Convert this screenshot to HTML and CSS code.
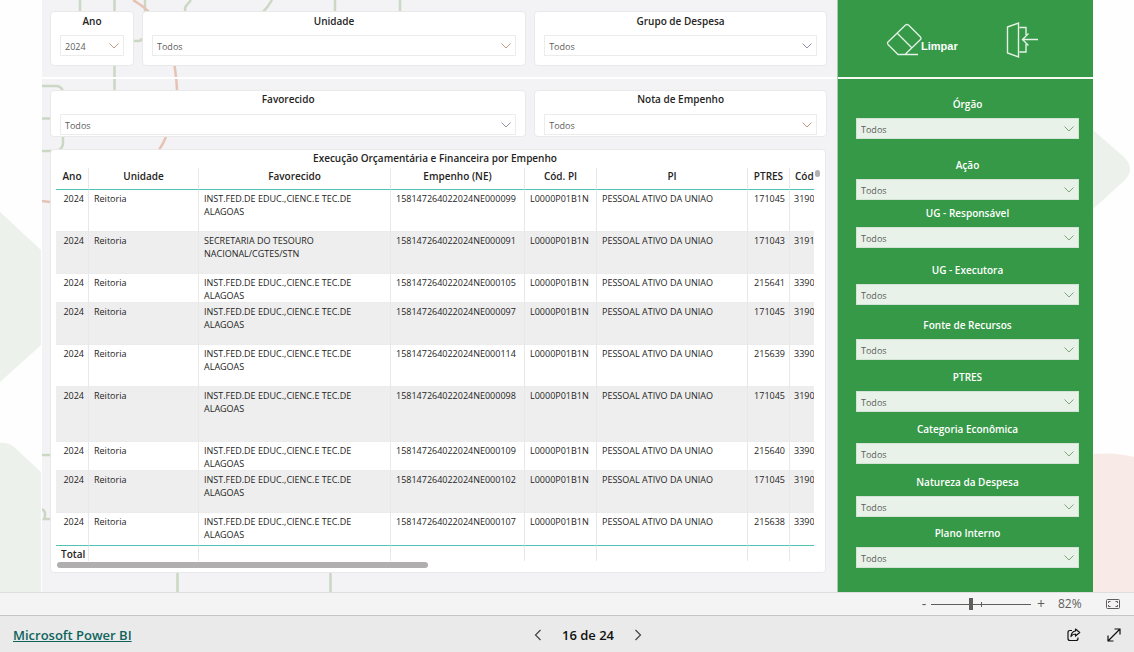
FILE: index.html
```html
<!DOCTYPE html>
<html lang="pt-BR">
<head>
<meta charset="utf-8">
<title>Execução Orçamentária e Financeira</title>
<link rel="stylesheet" href="styles.css">
</head>
<body>
<main class="stage">
  <svg class="backdrop backdrop-left" width="42" height="592" viewBox="0 0 42 592" aria-hidden="true">
    <path d="M0 212L41 250V345L0 382ZM0 443Q8 442 14 447L41 472V592H0Z" fill="#edf1ec"/>
  </svg>
  <svg class="backdrop backdrop-right" width="41" height="592" viewBox="0 0 41 592" aria-hidden="true">
    <path d="M0 130L32 158Q42 169 32 180L0 209Z" fill="#edf1ec"/>
    <path d="M0 454Q22 452 41 457V592H0Z" fill="#f8eae6"/>
  </svg>
  <div class="report">
    <section class="content">
      <svg class="lines" width="795" height="592" viewBox="42 0 795 592" fill="none" stroke="#cad8c4" stroke-width="2.5" aria-hidden="true">
        <path d="M80 0V12M114.500 0V90M145 0V12M191 0L186 6Q184 9 186 12M272 0Q268 7 263 12M335 0V12M400 0V12M133 41H138Q142 41 142 38M42 86H57Q63 87 63 93V144Q62 150 56 151H42M42 118.500H51M42 455H50M42 509Q47 512 44 519H50M177.500 572V592M330.500 572V592"/>
        <path d="M133 0Q150 10 160 25Q175 48 177 90M166 137Q163 144 159 150M42 201L50 202" stroke="#e6c2b5"/>
      </svg>
      <div class="filters filters-top">
        <div class="card slicer"><label for="ano">Ano</label><div class="pick warm"><select id="ano"><option>2024</option></select><svg viewBox="0 0 10 6"><path d="M.5.500L5 5L9.500.500"/></svg></div></div>
        <div class="card slicer"><label for="unidade">Unidade</label><div class="pick warm"><select id="unidade"><option>Todos</option></select><svg viewBox="0 0 10 6"><path d="M.5.500L5 5L9.500.500"/></svg></div></div>
        <div class="card slicer"><label for="grupo">Grupo de Despesa</label><div class="pick"><select id="grupo"><option>Todos</option></select><svg viewBox="0 0 10 6"><path d="M.5.500L5 5L9.500.500"/></svg></div></div>
      </div>
      <div class="filters filters-bottom">
        <div class="card slicer"><label for="favorecido">Favorecido</label><div class="pick"><select id="favorecido"><option>Todos</option></select><svg viewBox="0 0 10 6"><path d="M.5.500L5 5L9.500.500"/></svg></div></div>
        <div class="card slicer"><label for="nota">Nota de Empenho</label><div class="pick warm"><select id="nota"><option>Todos</option></select><svg viewBox="0 0 10 6"><path d="M.5.500L5 5L9.500.500"/></svg></div></div>
      </div>
      <div class="card grid-card">
        <h2>Execução Orçamentária e Financeira por Empenho</h2>
        <div class="grid-view">
        <table>
          <colgroup><col class="c-year"><col class="c-unit"><col class="c-payee"><col class="c-note"><col class="c-code"><col class="c-plan"><col class="c-ptres"><col></colgroup>
          <thead><tr><th>Ano</th><th>Unidade</th><th>Favorecido</th><th>Empenho (NE)</th><th>Cód. PI</th><th>PI</th><th>PTRES</th><th class="cut">Cód</th></tr></thead>
          <tbody>
            <tr><td>2024</td><td>Reitoria</td><td>INST.FED.DE EDUC.,CIENC.E TEC.DE ALAGOAS</td><td>158147264022024NE000099</td><td>L0000P01B1N</td><td>PESSOAL ATIVO DA UNIAO</td><td>171045</td><td class="cut">3190</td></tr>
            <tr><td>2024</td><td>Reitoria</td><td>SECRETARIA DO TESOURO NACIONAL/CGTES/STN</td><td>158147264022024NE000091</td><td>L0000P01B1N</td><td>PESSOAL ATIVO DA UNIAO</td><td>171043</td><td class="cut">3191</td></tr>
            <tr class="short"><td>2024</td><td>Reitoria</td><td>INST.FED.DE EDUC.,CIENC.E TEC.DE ALAGOAS</td><td>158147264022024NE000105</td><td>L0000P01B1N</td><td>PESSOAL ATIVO DA UNIAO</td><td>215641</td><td class="cut">3390</td></tr>
            <tr><td>2024</td><td>Reitoria</td><td>INST.FED.DE EDUC.,CIENC.E TEC.DE ALAGOAS</td><td>158147264022024NE000097</td><td>L0000P01B1N</td><td>PESSOAL ATIVO DA UNIAO</td><td>171045</td><td class="cut">3190</td></tr>
            <tr><td>2024</td><td>Reitoria</td><td>INST.FED.DE EDUC.,CIENC.E TEC.DE ALAGOAS</td><td>158147264022024NE000114</td><td>L0000P01B1N</td><td>PESSOAL ATIVO DA UNIAO</td><td>215639</td><td class="cut">3390</td></tr>
            <tr class="tall"><td>2024</td><td>Reitoria</td><td>INST.FED.DE EDUC.,CIENC.E TEC.DE ALAGOAS</td><td>158147264022024NE000098</td><td>L0000P01B1N</td><td>PESSOAL ATIVO DA UNIAO</td><td>171045</td><td class="cut">3190</td></tr>
            <tr class="short"><td>2024</td><td>Reitoria</td><td>INST.FED.DE EDUC.,CIENC.E TEC.DE ALAGOAS</td><td>158147264022024NE000109</td><td>L0000P01B1N</td><td>PESSOAL ATIVO DA UNIAO</td><td>215640</td><td class="cut">3390</td></tr>
            <tr><td>2024</td><td>Reitoria</td><td>INST.FED.DE EDUC.,CIENC.E TEC.DE ALAGOAS</td><td>158147264022024NE000102</td><td>L0000P01B1N</td><td>PESSOAL ATIVO DA UNIAO</td><td>171045</td><td class="cut">3190</td></tr>
            <tr class="last"><td>2024</td><td>Reitoria</td><td>INST.FED.DE EDUC.,CIENC.E TEC.DE ALAGOAS</td><td>158147264022024NE000107</td><td>L0000P01B1N</td><td>PESSOAL ATIVO DA UNIAO</td><td>215638</td><td class="cut">3390</td></tr>
          </tbody>
          <tfoot><tr><th scope="row">Total</th><td></td><td></td><td></td><td></td><td></td><td></td><td></td></tr></tfoot>
        </table>
        <span class="thumb-y"></span>
        </div>
        <div class="thumb-x"></div>
      </div>
    </section>
    <aside class="sidebar">
      <div class="actions">
        <button type="button" class="clear"><svg width="36" height="34" viewBox="0 0 36 34" fill="none" stroke="#e4f2e6" stroke-width="1.300" stroke-linejoin="round"><path d="M32 31.500H12L2 21.500Q1 20 2 19L19.500 2Q21 1 22.500 2L34.500 14Q35.500 15.500 34.500 16.500L19 31.500M11.500 10.500L25.500 24.500"/></svg><span>Limpar</span></button>
        <button type="button" class="exit" aria-label="Sair"><svg width="32" height="36" viewBox="0 0 32 36" fill="none" stroke="#e4f2e6" stroke-width="1.400"><path d="M1.500 5L12.500 1V35L1.500 31ZM13.500 5.500H20V13M20 22V30H13.500M16 17.500H32M22.500 11.500L16.500 17.500L22.500 23.500"/></svg></button>
      </div>
      <div class="side-filters">
        <div class="field"><label for="orgao">Órgão</label><div class="pick"><select id="orgao"><option>Todos</option></select><svg viewBox="0 0 10 6"><path d="M.5.500L5 5L9.500.500"/></svg></div></div>
        <div class="field"><label for="acao">Ação</label><div class="pick"><select id="acao"><option>Todos</option></select><svg viewBox="0 0 10 6"><path d="M.5.500L5 5L9.500.500"/></svg></div></div>
        <div class="field"><label for="ugr">UG - Responsável</label><div class="pick"><select id="ugr"><option>Todos</option></select><svg viewBox="0 0 10 6"><path d="M.5.500L5 5L9.500.500"/></svg></div></div>
        <div class="field"><label for="uge">UG - Executora</label><div class="pick"><select id="uge"><option>Todos</option></select><svg viewBox="0 0 10 6"><path d="M.5.500L5 5L9.500.500"/></svg></div></div>
        <div class="field"><label for="fonte">Fonte de Recursos</label><div class="pick"><select id="fonte"><option>Todos</option></select><svg viewBox="0 0 10 6"><path d="M.5.500L5 5L9.500.500"/></svg></div></div>
        <div class="field"><label for="ptres">PTRES</label><div class="pick"><select id="ptres"><option>Todos</option></select><svg viewBox="0 0 10 6"><path d="M.5.500L5 5L9.500.500"/></svg></div></div>
        <div class="field"><label for="categoria">Categoria Econômica</label><div class="pick"><select id="categoria"><option>Todos</option></select><svg viewBox="0 0 10 6"><path d="M.5.500L5 5L9.500.500"/></svg></div></div>
        <div class="field"><label for="natureza">Natureza da Despesa</label><div class="pick"><select id="natureza"><option>Todos</option></select><svg viewBox="0 0 10 6"><path d="M.5.500L5 5L9.500.500"/></svg></div></div>
        <div class="field"><label for="plano">Plano Interno</label><div class="pick"><select id="plano"><option>Todos</option></select><svg viewBox="0 0 10 6"><path d="M.5.500L5 5L9.500.500"/></svg></div></div>
      </div>
    </aside>
  </div>
</main>
<div class="zoombar">
  <button type="button" class="step" aria-label="Reduzir">-</button>
  <input type="range" min="10" max="190" value="82" aria-label="Zoom">
  <button type="button" class="step" aria-label="Ampliar">+</button>
  <output>82%</output>
  <button type="button" class="fit" aria-label="Ajustar à página"><svg width="14" height="12" viewBox="0 0 14 12" fill="none" stroke="#605e5c"><rect x=".5" y="1.500" width="13" height="9" rx="1"/><path d="M4.500 3.500H2.500V5M9.500 3.500H11.500V5M4.500 8.500H2.500V7M9.500 8.500H11.500V7"/></svg></button>
</div>
<footer class="footer">
  <a href="#">Microsoft Power BI</a>
  <nav class="pager">
    <button type="button" aria-label="Página anterior"><svg width="8" height="12" viewBox="0 0 8 12"><path d="M6.500 1L1.500 6L6.500 11"/></svg></button>
    <span>16 de 24</span>
    <button type="button" aria-label="Próxima página"><svg width="8" height="12" viewBox="0 0 8 12"><path d="M1.500 1L6.500 6L1.500 11"/></svg></button>
  </nav>
  <div class="tools">
    <button type="button" aria-label="Compartilhar"><svg width="14" height="14" viewBox="0 0 14 14" fill="none" stroke="#111" stroke-width="1.200" stroke-linejoin="round"><path d="M5 2.500H3Q1 2.500 1 4.500V10.500Q1 12.500 3 12.500H9Q11 12.500 11 10.500V9.500M8.500 1L12.700 4.500L8.500 8V6Q5.500 6 4 8.500Q4.500 3.500 8.500 3Z"/></svg></button>
    <button type="button" aria-label="Tela cheia"><svg width="14" height="14" viewBox="0 0 14 14" fill="none" stroke="#111" stroke-width="1.200"><path d="M1 13L13 1M7.500 1H13V6.500M1 7.500V13H6.500"/></svg></button>
  </div>
</footer>
</body>
</html>
```
FILE: styles.css
```css
* { box-sizing: border-box; }
body {
  margin: 0;
  min-height: 100vh;
  display: flex;
  flex-direction: column;
  font-family: "Open Sans", "Noto Sans", sans-serif;
  font-size: 10px;
  color: #252423;
  background: #fdfefd;
}
button { border: 0; padding: 0; background: none; font: inherit; color: inherit; display: flex; align-items: center; }
svg { display: block; flex: none; }

.stage { position: relative; flex: 1; display: flex; padding: 0 41px 0 42px; }
.backdrop { position: absolute; top: 0; }
.backdrop-left { left: 0; }
.backdrop-right { right: 0; }
.report { flex: 1; display: grid; grid-template-columns: minmax(0, 1fr) 256px; position: relative; }

.content { position: relative; background: #f3f3f5; padding-bottom: 18px; overflow: hidden; }
.lines { position: absolute; left: 0; top: 0; }
.filters { position: relative; display: grid; gap: 8px; padding: 0 10px 0 8px; }
.filters-top { grid-template-columns: 84px minmax(0, 383fr) minmax(0, 292fr); padding-top: 11px; padding-bottom: 11px; border-bottom: 2px solid #fff; }
.filters-bottom { grid-template-columns: minmax(0, 475fr) minmax(0, 292fr); padding-top: 11px; padding-bottom: 12px; }
.card { position: relative; background: #fff; border: 1px solid #e9e9ea; border-radius: 4px; }
.slicer { padding: 2px 9px 9px; }
.slicer label, .field label { display: block; text-align: center; font-size: 10px; line-height: 14px; font-weight: 600; margin-bottom: 7px; }
.filters-bottom .slicer { padding-top: 1px; padding-bottom: 1px; }
.filters-bottom .slicer label { margin-bottom: 8px; }
.pick { position: relative; }
.pick select {
  display: block; width: 100%; height: 21px; appearance: none;
  border: 1px solid #ececec; border-radius: 0; background: #fff;
  font: inherit; font-size: 9px; color: #605e5c; padding: 2px 4px 0;
}
.pick svg { position: absolute; right: 5px; top: 8px; width: 10px; height: 6px; fill: none; stroke: #8f8fa6; pointer-events: none; }
.pick.warm svg { stroke: #c29a80; }

.grid-card { margin: 0 11px 0 8px; padding: 1px 11px 4px 5px; }
.grid-card h2 { margin: 0 0 2px; font-size: 10px; line-height: 15px; font-weight: 600; text-align: center; }
.grid-view { position: relative; }
table { width: 100%; table-layout: fixed; border-collapse: separate; border-spacing: 0; line-height: 13px; }
.c-year { width: 33px; }
.c-unit { width: 110px; }
.c-payee { width: 192px; }
.c-note { width: 134px; }
.c-code { width: 72px; }
.c-plan { width: 151px; }
.c-ptres { width: 42px; }
th, td { border-right: 1px solid #e8e8e8; padding: 2px 4px 0 5px; vertical-align: top; text-align: left; overflow: hidden; white-space: nowrap; }
th { font-weight: 600; }
td { font-size: 9px; }
td:nth-child(3) { white-space: normal; }
th:last-child, td:last-child { border-right: 0; }
thead th { height: 22px; padding: 2px 0 0; text-align: center; border-bottom: 1px solid #4fc4b6; }
thead .cut { text-align: left; padding-left: 5px; }
tbody tr { height: 42px; }
tbody .short { height: 28px; }
tbody .tall { height: 55px; }
tbody .last { height: 32px; }
tbody td { border-bottom: 1px solid #ececec; }
tbody td.cut { padding-right: 0; padding-left: 4px; }
tbody tr:nth-child(even) td { background: #eee; }
td:nth-child(1), td:nth-child(7) { text-align: right; }
tfoot th, tfoot td { height: 16px; border-top: 1px solid #4fc4b6; }
tbody .last td { border-bottom: 0; }
.thumb-y { position: absolute; right: -6px; top: 2px; width: 5px; height: 7px; border-radius: 3px; background: #b0b0b0; }
.thumb-x { width: 49%; height: 6px; border-radius: 3px; background: #b0aeae; margin: 1px 0 0 1px; }

.sidebar { background: #359947; border-left: 1px solid #a9c8ae; color: #fff; }
.actions { display: flex; gap: 48px; height: 79px; border-bottom: 2px solid #f5faf5; padding: 2px 0 0 48px; }
.clear span { font-family: "Liberation Sans", sans-serif; font-size: 11px; font-weight: 700; line-height: 14px; padding-top: 12px; margin-left: -1px; }
.side-filters { display: grid; grid-template-rows: 61px 48px 57px 55px 52px 52px 53px 51px auto; padding: 18px 14px 8px 18px; }
.field .pick select { background: #e8f2e9; border-color: #d3e3d5; }
.field .pick svg { stroke: #80a382; }

.zoombar { height: 23px; display: flex; align-items: center; justify-content: flex-end; padding: 0 14px 0 0; background: #f4f4f4; border-top: 1px solid #dedede; color: #605e5c; }
.step { width: 10px; justify-content: center; font-size: 14px; line-height: 20px; }
.zoombar input { appearance: none; width: 100px; height: 12px; margin: 0 5px 0 2px; background: linear-gradient(#605e5c, #605e5c) 50px 50% / 1px 5px no-repeat, linear-gradient(#605e5c, #605e5c) 0 50% / 100% 1px no-repeat; }
.zoombar input::-webkit-slider-thumb { appearance: none; width: 4px; height: 12px; background: #605e5c; }
.zoombar output { width: 24px; margin: 0 24px 0 12px; font-size: 12px; line-height: 20px; }
.footer { height: 37px; display: grid; grid-template-columns: 1fr auto 1fr; align-items: center; padding: 2px 13px 0 13px; background: #eaeaea; border-top: 1px solid #c6c6c6; font-size: 13px; }
.footer a { color: #0e645d; font-weight: 600; justify-self: start; }
.pager { display: flex; gap: 20px; align-items: center; font-weight: 600; color: #111; padding-left: 42px; }
.pager svg { fill: none; stroke: #444; stroke-width: 1.2; }
.tools { display: flex; gap: 26px; justify-self: end; }
```
